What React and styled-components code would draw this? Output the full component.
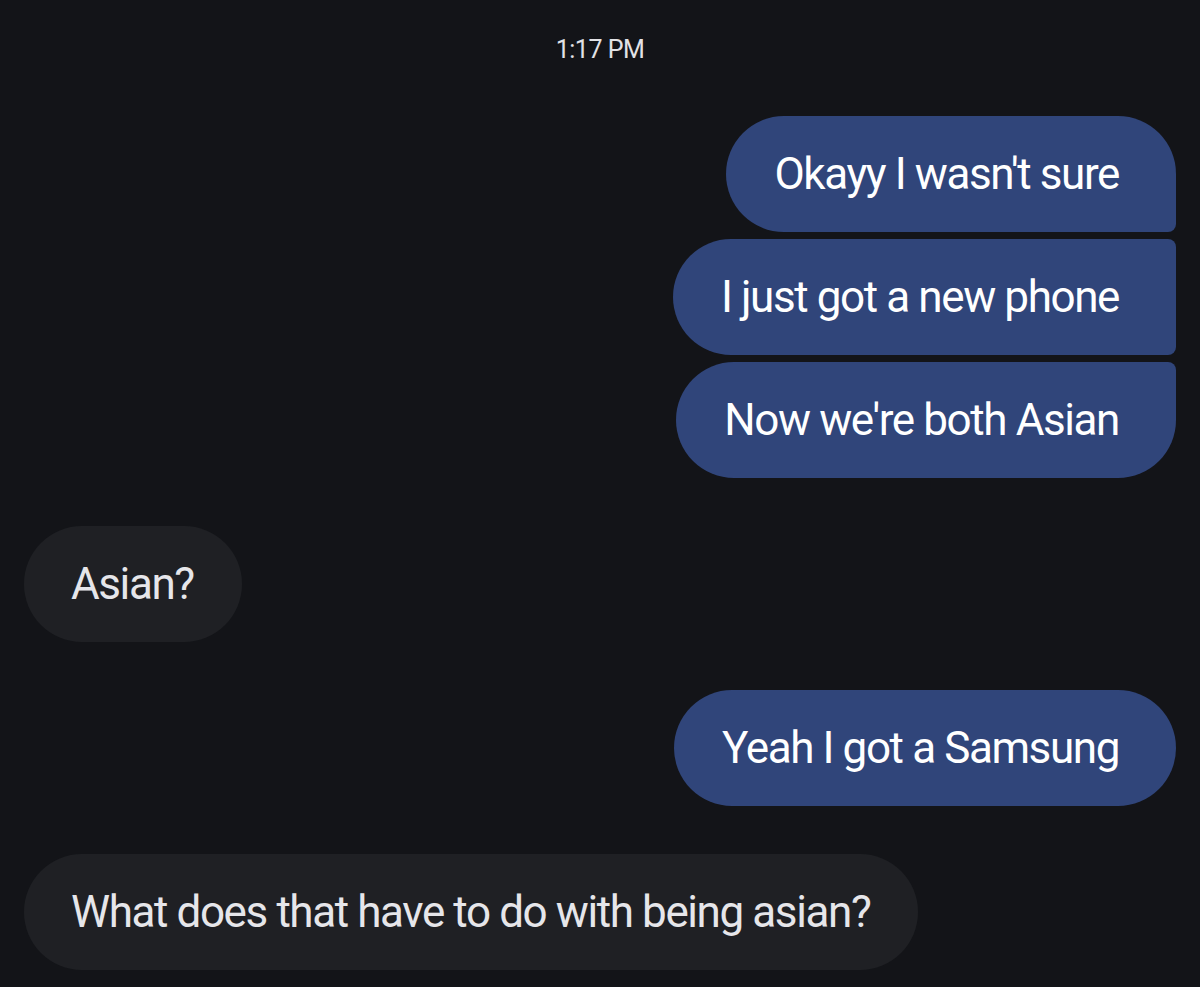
import React from "react";
import styled, { createGlobalStyle, css } from "styled-components";

const Global = createGlobalStyle`
  html, body { margin: 0; padding: 0; background: #131418; }
  body { font-family: Roboto, "Noto Sans", "Liberation Sans", sans-serif; }
`;

const Screen = styled.div`
  width: 1200px;
  height: 987px;
  background: #131418;
  overflow: hidden;
  display: flex;
  flex-direction: column;
  padding: 0 24px;
  box-sizing: border-box;
`;

const Stamp = styled.div`
  text-align: center;
  color: #e2e2e6;
  font-size: 25px;
  letter-spacing: -0.5px;
  line-height: 32px;
  padding-top: 34px;
  margin-bottom: 50px;
`;

const Group = styled.div`
  display: flex;
  flex-direction: column;
  align-items: ${(p) => (p.$me ? "flex-end" : "flex-start")};
  gap: 7px;
  margin-bottom: 48px;
`;

const BIG = 58;
const SMALL = 8;

const Bubble = styled.div`
  height: 116px;
  box-sizing: border-box;
  display: flex;
  align-items: center;
  font-size: 44px;
  letter-spacing: -1.4px;
  white-space: nowrap;
  border-radius: ${BIG}px;
  ${(p) =>
    p.$me
      ? css`
          padding: 0 57px 0 48px;
          background: #30457a;
          color: #ffffff;
        `
      : css`
          padding: 0 48px 0 47px;
          background: #1f2024;
          color: #e6e6ea;
        `}
  ${(p) =>
    p.$pos === "first" &&
    css`
      border-bottom-right-radius: ${SMALL}px;
    `}
  ${(p) =>
    p.$pos === "middle" &&
    css`
      border-top-right-radius: ${SMALL}px;
      border-bottom-right-radius: ${SMALL}px;
    `}
  ${(p) =>
    p.$pos === "last" &&
    css`
      border-top-right-radius: ${SMALL}px;
    `}
`;

export default function App() {
  return (
    <>
      <Global />
      <Screen>
        <Stamp>1:17 PM</Stamp>
        <Group $me>
          <Bubble $me $pos="first">Okayy I wasn't sure</Bubble>
          <Bubble $me $pos="middle">I just got a new phone</Bubble>
          <Bubble $me $pos="last">Now we're both Asian</Bubble>
        </Group>
        <Group>
          <Bubble>Asian?</Bubble>
        </Group>
        <Group $me>
          <Bubble $me>Yeah I got a Samsung</Bubble>
        </Group>
        <Group>
          <Bubble>What does that have to do with being asian?</Bubble>
        </Group>
      </Screen>
    </>
  );
}
